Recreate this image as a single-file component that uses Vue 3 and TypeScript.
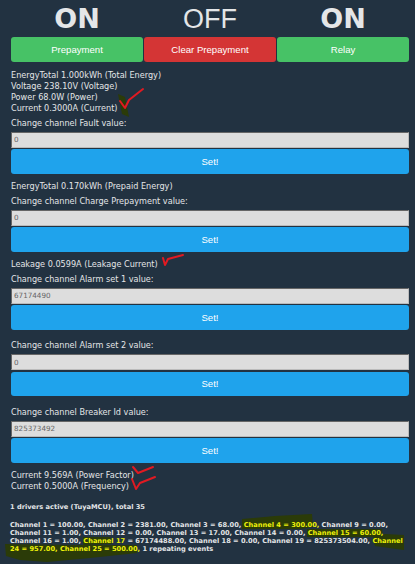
<template>
  <div class="page">
    <svg class="marks under" width="415" height="564" viewBox="0 0 415 564">
      <path class="ink-green" d="M118 94 L125 97 L129 117 L122 114 Z" />
      <path class="ink-green" d="M242 519 L275 516 L312 514 L313 527 L300 529 L242 529 Z" />
      <path class="ink-green" d="M307 529 L382 529 L383 537 L307 537 Z" />
      <path class="ink-green" d="M373 537 L385 534 L404 535 L404 550 L375 546 Z" />
      <path class="ink-green" d="M83 537 L110 537 L112 544 L83 545 Z" />
      <path class="ink-green" d="M5 544 L70 545 L137 545 L137 553 L90 558 L47 562 L20 560 L6 556 Z" />
    </svg>

    <div class="states">
      <div class="state on">ON</div>
      <div class="state">OFF</div>
      <div class="state on">ON</div>
    </div>
    <div class="toggles">
      <button class="btn green">Prepayment</button>
      <button class="btn red">Clear Prepayment</button>
      <button class="btn green">Relay</button>
    </div>

    <div class="readings first">
      <div>EnergyTotal 1.000kWh (Total Energy)</div>
      <div>Voltage 238.10V (Voltage)</div>
      <div>Power 68.0W (Power)</div>
      <div>Current 0.3000A (Current)</div>
    </div>
    <form class="channel" @submit.prevent>
      <label>Change channel Fault value:</label>
      <input type="text" value="0" />
      <button class="btn blue">Set!</button>
    </form>

    <div class="readings">
      <div>EnergyTotal 0.170kWh (Prepaid Energy)</div>
    </div>
    <form class="channel" @submit.prevent>
      <label>Change channel Charge Prepayment value:</label>
      <input type="text" value="0" />
      <button class="btn blue">Set!</button>
    </form>

    <div class="readings">
      <div>Leakage 0.0599A (Leakage Current)</div>
    </div>
    <form class="channel" @submit.prevent>
      <label>Change channel Alarm set 1 value:</label>
      <input type="text" value="67174490" />
      <button class="btn blue">Set!</button>
    </form>

    <form class="channel spaced" @submit.prevent>
      <label>Change channel Alarm set 2 value:</label>
      <input type="text" value="0" />
      <button class="btn blue">Set!</button>
    </form>

    <form class="channel spaced" @submit.prevent>
      <label>Change channel Breaker Id value:</label>
      <input type="text" value="825373492" />
      <button class="btn blue">Set!</button>
    </form>

    <div class="readings">
      <div>Current 9.569A (Power Factor)</div>
      <div>Current 0.5000A (Frequency)</div>
    </div>

    <div class="status">
      <p>1 drivers active (TuyaMCU), total 35</p>
      <p>
        Channel 1 = 100.00, Channel 2 = 2381.00, Channel 3 = 68.00,
        <mark>Channel 4 = 300.00,</mark> Channel 9 = 0.00, Channel 11 = 1.00, Channel 12 = 0.00,
        Channel 13 = 17.00, Channel 14 = 0.00, <mark>Channel 15 = 60.00,</mark>
        Channel 16 = 1.00, <mark>Channel 17</mark> = 67174488.00, Channel 18 = 0.00, Channel 19 = 825373504.00,
        <mark>Channel 24 = 957.00, Channel 25 = 500.00,</mark> 1 repeating events
      </p>
    </div>

    <svg class="marks" width="415" height="564" viewBox="0 0 415 564" fill="none">
      <path class="ink-red" d="M120 101 L125 108 L129 100 L143 89" />
      <path class="ink-red" d="M163 258 L165 265 L168 259 L183 255" />
      <path class="ink-red" d="M133 467 L138 473 L153 467" />
      <path class="ink-red" d="M132 479 L136 489 L140 483 L155 477" />
    </svg>
  </div>
</template>

<script setup lang="ts">
</script>

<style>
html,
body {
  margin: 0;
  background: #223241;
}
</style>

<style scoped>
.page {
  position: relative;
  box-sizing: border-box;
  width: 415px;
  height: 564px;
  overflow: hidden;
  padding: 0 6px 0 11px;
  background: #223241;
  color: #e4e6e8;
  font-family: "DejaVu Sans", sans-serif;
  font-size: 8.15px;
  line-height: 11px;
}

.states,
.toggles {
  position: relative;
  display: grid;
  grid-template-columns: repeat(3, 1fr);
  gap: 1px;
}

.state {
  height: 37px;
  font-family: "Liberation Sans", sans-serif;
  font-size: 27px;
  line-height: 38px;
  text-align: center;
}

.state.on {
  font-family: "DejaVu Sans", sans-serif;
  font-weight: 700;
}

.btn {
  display: block;
  width: 100%;
  height: 24.5px;
  padding: 0;
  border: 0;
  border-radius: 3px;
  color: #fff;
  font-family: "Liberation Sans", sans-serif;
  font-size: 9.6px;
}

.green {
  background: #47c266;
}

.red {
  background: #d43535;
}

.blue {
  background: #1fa3ec;
}

.readings {
  position: relative;
  margin-top: 7px;
}

.readings.first {
  margin-top: 8px;
}

.channel {
  position: relative;
  margin: 0;
}

.channel.spaced {
  margin-top: 10.5px;
}

.channel label {
  display: block;
  margin-top: 4px;
  margin-bottom: 3px;
}

.channel input {
  display: block;
  box-sizing: border-box;
  width: 100%;
  height: 16px;
  margin-bottom: 1.5px;
  padding: 0 2px;
  border: 1px solid;
  border-color: #666 #bbb #bbb #666;
  background: #ddd;
  color: #666;
  font-family: "DejaVu Sans", sans-serif;
  font-size: 7.2px;
}

.status {
  position: relative;
  margin: 11.5px 0 0 -1px;
  font-size: 6.65px;
  font-weight: 700;
  line-height: 8px;
}

.status p {
  margin: 0 0 10px;
}

mark {
  background: none;
  color: #eef20a;
}

.marks {
  position: absolute;
  top: 0;
  left: 0;
  pointer-events: none;
}

.ink-red {
  stroke: #e01a22;
  stroke-width: 2;
  stroke-linecap: round;
  stroke-linejoin: round;
}

.ink-green {
  fill: #2b3b08;
}
</style>
